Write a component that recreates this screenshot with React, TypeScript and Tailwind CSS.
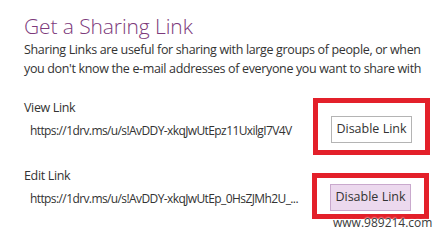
const links = [
  {
    label: "View Link",
    url: "https://1drv.ms/u/s!AvDDY-xkqJwUtEpz11UxilgI7V4V",
  },
  {
    label: "Edit Link",
    url: "https://1drv.ms/u/s!AvDDY-xkqJwUtEp_0HsZJMh2U_...",
  },
];

const App = () => {
  return (
    <div
      className="relative w-[438px] h-[232px] bg-white overflow-hidden text-[#333]"
      style={{ fontFamily: '"Open Sans", "Noto Sans", sans-serif' }}
    >
      <div className="pt-[12px] pl-[24px] pr-[8px]">
        <h1 className="text-[21px] leading-[28px] text-[#7d3a7b] font-light tracking-[-0.1px]">
          Get a Sharing Link
        </h1>
        <p className="text-[12.5px] leading-[19px] tracking-[-0.35px]">
          Sharing Links are useful for sharing with large groups of people, or when
          you don't know the e-mail addresses of everyone you want to share with
        </p>

        {/* view link */}
        <div className="mt-[20px] flex items-start">
          <div className="flex-1 whitespace-nowrap text-[12.5px] leading-[19px] tracking-[-0.35px]">
            <div>{links[0].label}</div>
            <div className="mt-[4px] pl-[6px] text-[12px] tracking-[-0.6px]">{links[0].url}</div>
          </div>
          <div className="shrink-0 w-[117px] h-[57px] border-[5px] border-[#e3202a] flex justify-center pt-[13px]">
            <button className="w-[81px] h-[27px] border border-[#b4b4b4] bg-white text-[12.5px] text-[#333] whitespace-nowrap">
              Disable Link
            </button>
          </div>
        </div>

        {/* edit link */}
        <div className="mt-[11px] flex items-start">
          <div className="flex-1 whitespace-nowrap text-[12.5px] leading-[19px] tracking-[-0.35px]">
            <div>{links[1].label}</div>
            <div className="mt-[4px] pl-[6px] text-[12px] tracking-[-0.6px]">{links[1].url}</div>
          </div>
          <div className="shrink-0 mt-[7px] mr-[1px] w-[117px] h-[46px] border-[5px] border-[#e3202a] flex justify-center pt-[6px]">
            <button className="w-[81px] h-[27px] border border-[#c9a9cd] bg-[#ecd9ee] text-[12.5px] text-[#333] whitespace-nowrap">
              Disable Link
            </button>
          </div>
        </div>
      </div>

      <div
        className="absolute left-[333px] top-[216px] text-[12px] leading-[14px] text-[#3a3a3a]"
        style={{ textShadow: "0 0 2px #fff, 0 0 2px #fff" }}
      >
        www.989214.com
      </div>
    </div>
  );
};

export default App;
